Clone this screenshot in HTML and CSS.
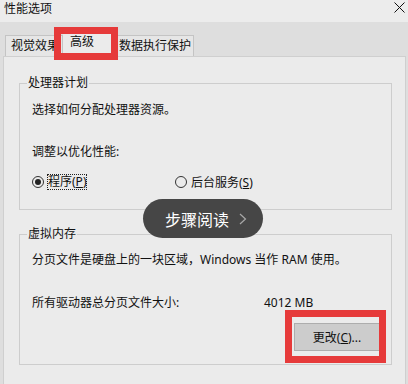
FILE: index.html
```html
<!DOCTYPE html>
<html lang="zh-CN">
<head>
  <meta charset="UTF-8" />
  <title>性能选项</title>
  <meta name="viewport" content="width=device-width, initial-scale=1.0" />
  <link rel="stylesheet" href="styles.css">
</head>
<body>
  <div class="window">
    <div class="titlebar">
      <span class="title">性能选项</span>
      <svg class="close" width="11" height="11" viewBox="0 0 11 11">
        <path d="M0.5 0.5 L10.5 10.5 M10.5 0.5 L0.5 10.5" stroke="#111" stroke-width="1" fill="none" />
      </svg>
    </div>

    <div class="tabs">
      <div class="tab first">视觉效果</div>
      <div class="tab active">高级</div>
      <div class="tab last">数据执行保护</div>
    </div>

    <div class="panel">
      <fieldset class="group cpu">
        <legend>处理器计划</legend>
        <p class="text">选择如何分配处理器资源。</p>
        <p class="text adjust">调整以优化性能:</p>
        <div class="radios">
          <label class="radio program">
            <span class="dot checked"></span>
            <span class="focus">程序(<u>P</u>)</span>
          </label>
          <label class="radio">
            <span class="dot"></span>
            <span>后台服务(<u>S</u>)</span>
          </label>
        </div>
      </fieldset>

      <fieldset class="group memory">
        <legend>虚拟内存</legend>
        <p class="text">分页文件是硬盘上的一块区域，Windows 当作 RAM 使用。</p>
        <div class="size-row">
          <span class="size-label">所有驱动器总分页文件大小:</span>
          <span>4012 MB</span>
        </div>
        <div class="btn-row">
          <button class="btn">更改(<u>C</u>)...</button>
        </div>
      </fieldset>
    </div>

    <!-- annotation overlays -->
    <div class="mark mark-tab"></div>
    <div class="mark mark-btn"></div>

    <div class="pill">
      <span>步骤阅读</span>
      <svg width="8" height="12" viewBox="0 0 8 12">
        <polyline points="1,1 6.5,6 1,11" stroke="#a8a8a8" stroke-width="1.2" fill="none" />
      </svg>
    </div>
  </div>
</body>
</html>
```

FILE: styles.css
```css
body {
  margin: 0;
  padding: 0;
  background-color: #dedede;
  font-family: "Noto Sans", "Noto Sans CJK SC", sans-serif;
  font-size: 12px;
  color: #111;
}

.window {
  position: relative;
  width: 408px;
  height: 384px;
  overflow: hidden;
}

.titlebar {
  height: 22px;
  box-sizing: border-box;
  background-color: #ececec;
  display: flex;
  justify-content: space-between;
  align-items: flex-start;
  padding: 0 3px 0 4px;
}

.title {
  line-height: 18px;
}

.close {
  margin-top: 2px;
}

.tabs {
  display: flex;
  align-items: flex-end;
  height: 34px;
  padding-left: 5px;
}

.tab {
  height: 21px;
  box-sizing: border-box;
  line-height: 19px;
  border: 1px solid #c4c4c4;
  border-bottom: none;
  background-color: #e6e6e6;
  white-space: nowrap;
}

.tab.first {
  padding: 0 3px 0 5px;
}

.tab.active {
  height: 25px;
  line-height: 20px;
  padding: 0 21px 0 7px;
  border-left: none;
  background-color: #ebebeb;
}

.tab.last {
  padding: 0 2px 0 3px;
  border-left: none;
}

.panel {
  margin: 0 2px 0 3px;
  height: 400px;
  border: 1px solid #cfcfcf;
  background-color: #ebebeb;
  padding: 18px 13px 0 15px;
}

.group {
  margin: 0;
  min-width: 0;
  border: 1px solid #cdcdcd;
}

.group legend {
  padding: 0 1px;
  margin-left: -5px;
  line-height: 16px;
}

.cpu {
  padding: 11px 11px 19px 12px;
}

.memory {
  margin-top: 16px;
  padding: 10px 11px 13px 12px;
}

.text {
  margin: 0;
  line-height: 16px;
  white-space: nowrap;
}

.adjust {
  margin-top: 26px;
}

.radios {
  display: flex;
  align-items: center;
  height: 16px;
  margin-top: 14px;
}

.radio {
  display: flex;
  align-items: center;
  white-space: nowrap;
}

.radio.program {
  width: 143px;
}

.dot {
  width: 12px;
  height: 12px;
  box-sizing: border-box;
  border: 1px solid #333;
  border-radius: 50%;
  margin-right: 4px;
  display: flex;
  align-items: center;
  justify-content: center;
}

.dot.checked::after {
  content: "";
  width: 6px;
  height: 6px;
  border-radius: 50%;
  background-color: #222;
}

.program .dot {
  margin-right: 3px;
}

.focus {
  border: 1px dotted #222;
  line-height: 14px;
}

.size-row {
  display: flex;
  margin-top: 27px;
  line-height: 16px;
  white-space: nowrap;
}

.size-label {
  width: 232px;
}

.btn-row {
  display: flex;
  justify-content: flex-end;
  margin-top: 12px;
}

.btn {
  width: 86px;
  height: 28px;
  padding: 0;
  font-family: inherit;
  font-size: 12px;
  color: #111;
  background-color: #cccccc;
  border: 1px solid #adadad;
}

.mark {
  position: absolute;
  box-sizing: border-box;
  border: 7px solid #e63a3a;
}

.mark-tab {
  left: 54px;
  top: 27px;
  width: 64px;
  height: 33px;
}

.mark-btn {
  left: 285px;
  top: 310px;
  width: 101px;
  height: 53px;
}

.pill {
  position: absolute;
  left: 143px;
  top: 199px;
  width: 120px;
  height: 39px;
  box-sizing: border-box;
  border-radius: 20px;
  background-color: #464646;
  color: #fff;
  font-family: "Noto Sans CJK SC", sans-serif;
  font-size: 16px;
  display: flex;
  align-items: center;
  gap: 10px;
  padding-left: 22px;
}
```
